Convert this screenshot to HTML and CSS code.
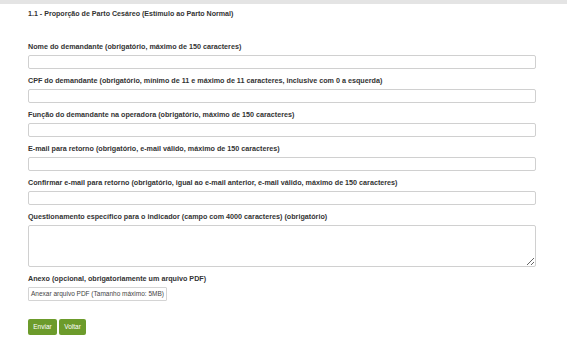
FILE: index.html
```html
<!DOCTYPE html>
<html lang="pt-BR">
<head>
<meta charset="utf-8">
<title>Formulário</title>
<link rel="stylesheet" href="styles.css">
</head>
<body>
<div class="topbar"></div>
<form class="form">
  <h1 class="title">1.1 - Proporção de Parto Cesáreo (Estímulo ao Parto Normal)</h1>
  <div class="field">
    <label class="label">Nome do demandante (obrigatório, máximo de 150 caracteres)</label>
    <input class="input" type="text">
  </div>
  <div class="field">
    <label class="label">CPF do demandante (obrigatório, mínimo de 11 e máximo de 11 caracteres, inclusive com 0 a esquerda)</label>
    <input class="input" type="text">
  </div>
  <div class="field">
    <label class="label">Função do demandante na operadora (obrigatório, máximo de 150 caracteres)</label>
    <input class="input" type="text">
  </div>
  <div class="field">
    <label class="label">E-mail para retorno (obrigatório, e-mail válido, máximo de 150 caracteres)</label>
    <input class="input" type="text">
  </div>
  <div class="field">
    <label class="label">Confirmar e-mail para retorno (obrigatório, igual ao e-mail anterior, e-mail válido, máximo de 150 caracteres)</label>
    <input class="input" type="text">
  </div>
  <div class="field">
    <label class="label">Questionamento específico para o indicador (campo com 4000 caracteres) (obrigatório)</label>
    <textarea class="textarea"></textarea>
  </div>
  <div class="field field-file">
    <label class="label">Anexo (opcional, obrigatoriamente um arquivo PDF)</label>
    <button type="button" class="file-btn">Anexar arquivo PDF (Tamanho máximo: 5MB)</button>
  </div>
  <div class="actions">
    <button type="button" class="btn btn-send">Enviar</button>
    <button type="button" class="btn btn-back">Voltar</button>
  </div>
</form>
</body>
</html>
```
FILE: styles.css
```css
* { box-sizing: border-box; }
html, body { margin: 0; padding: 0; background: #fff; }
body {
  font-family: "Liberation Sans", Arial, sans-serif;
  color: #333;
  width: 567px;
  height: 349px;
  overflow: hidden;
}
.topbar {
  height: 4px;
  background: #e4e4e4;
}
.form {
  padding: 5px 0 0 28px;
  width: 536px;
}
.title {
  margin: 0 0 23px 0;
  font-size: 7.1px;
  line-height: 10px;
  font-weight: bold;
  color: #333;
}
.field {
  display: flex;
  flex-direction: column;
  margin-bottom: 7px;
}
.label {
  font-size: 7.2px;
  line-height: 10px;
  font-weight: bold;
  color: #333;
  margin-bottom: 3px;
}
.input {
  display: block;
  width: 508px;
  height: 14px;
  border: 1px solid #d0d0d0;
  border-radius: 2px;
  background: #fff;
  padding: 0;
  margin: 0;
}
.textarea {
  display: block;
  width: 508px;
  height: 42px;
  border: 1px solid #d0d0d0;
  border-radius: 2px;
  background: #fff;
  padding: 0;
  margin: 0;
  resize: vertical;
}
.field-file {
  margin-top: 1px;
  margin-bottom: 18px;
}
.file-btn {
  align-self: flex-start;
  width: 139px;
  height: 14px;
  padding: 0;
  border: 1px solid #d4d4d4;
  border-radius: 1px;
  background: #fff;
  font-family: "Liberation Sans", Arial, sans-serif;
  font-size: 6.5px;
  color: #444;
  line-height: 12px;
}
.actions {
  display: flex;
  gap: 2px;
}
.btn {
  height: 16px;
  padding: 0;
  border: 0;
  border-radius: 2px;
  background: #6c9b2b;
  color: #fff;
  font-family: "Liberation Sans", Arial, sans-serif;
  font-size: 6.5px;
  line-height: 16px;
}
.btn-send { width: 29px; }
.btn-back { width: 27px; }
```
